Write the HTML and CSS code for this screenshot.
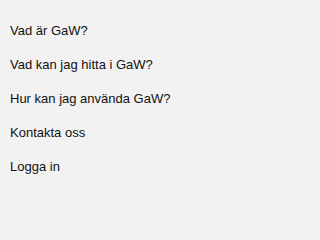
FILE: index.html
```html
<!DOCTYPE html>
<html lang="sv">
<head>
<meta charset="utf-8">
<link rel="stylesheet" href="styles.css">
</head>
<body>
<nav class="menu">
  <a class="menu-item" href="#">Vad är GaW?</a>
  <a class="menu-item" href="#">Vad kan jag hitta i GaW?</a>
  <a class="menu-item" href="#">Hur kan jag använda GaW?</a>
  <a class="menu-item" href="#">Kontakta oss</a>
  <a class="menu-item" href="#">Logga in</a>
</nav>
</body>
</html>
```
FILE: styles.css
```css
html, body {
  margin: 0;
  padding: 0;
  background: #f2f2f2;
  height: 100%;
}
.menu {
  display: flex;
  flex-direction: column;
  padding: 14px 0 0 10px;
  font-family: "Liberation Sans", Arial, sans-serif;
  font-size: 13px;
}
.menu-item {
  display: block;
  line-height: 34px;
  color: #111;
  text-decoration: none;
}
```
